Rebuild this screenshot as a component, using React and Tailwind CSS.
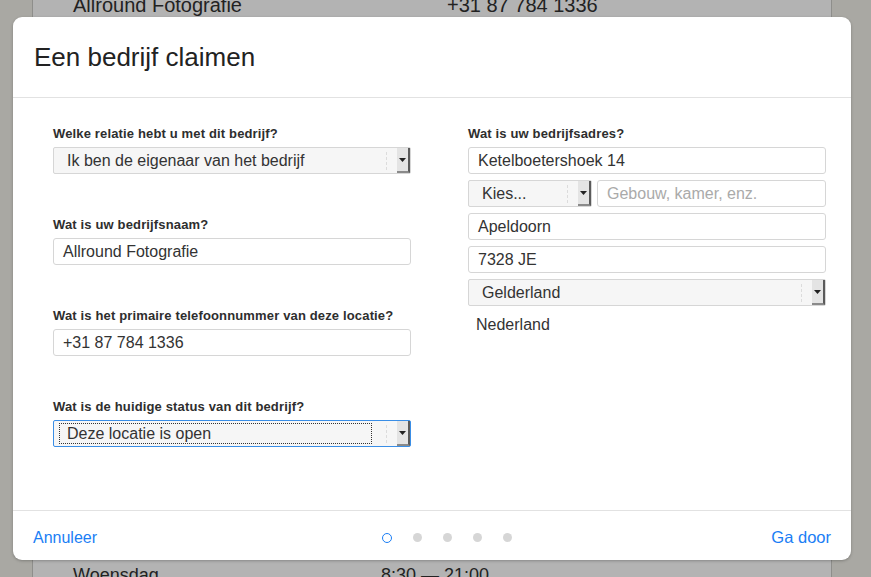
import React from "react";

const font = { fontFamily: '"Liberation Sans", Arial, sans-serif' };

function Arrow() {
  return (
    <span className="flex items-center h-full">
      <span className="h-[18px] border-l border-dashed border-[#dcdcdc] mr-[10px]" />
      <span className="flex items-center justify-center w-[13px] h-[25px] bg-[#e4e4e4] border-r-2 border-b-2 border-r-[#5a5a5a] border-b-[#8a8a8a]">
        <svg width="7" height="4" viewBox="0 0 7 4">
          <path d="M0 0 L7 0 L3.5 4 Z" fill="#222" />
        </svg>
      </span>
    </span>
  );
}

function Select({ value, focused, className = "" }) {
  return (
    <div
      className={`flex items-center justify-between h-[27px] rounded-[2px] bg-[#f6f6f6] ${
        focused ? "border border-[#3a8ee6]" : "border border-[#d6d6d6]"
      } ${className}`}
    >
      {focused ? (
        <span className="ml-[5px] flex-1 h-[21px] border border-dotted border-[#333] flex items-center pl-[7px] text-[16px] text-[#333]">
          {value}
        </span>
      ) : (
        <span className="pl-[13px] text-[16px] text-[#333]">{value}</span>
      )}
      <span className={focused ? "ml-[14px]" : ""}>
        <Arrow />
      </span>
    </div>
  );
}

function Input({ value, placeholder, className = "" }) {
  return (
    <div
      className={`flex items-center h-[27px] rounded-[3px] border border-[#d6d6d6] bg-white pl-[9px] text-[16px] ${
        value ? "text-[#333]" : "text-[#aaa]"
      } ${className}`}
    >
      {value || placeholder}
    </div>
  );
}

function Field({ label, children }) {
  return (
    <div className="flex flex-col">
      <div className="h-[16px] mb-[5px] text-[13px] leading-[16px] font-semibold text-[#2e2e2e] tracking-[0.15px]">
        {label}
      </div>
      {children}
    </div>
  );
}

export default function App() {
  return (
    <div className="relative w-[871px] h-[577px] overflow-hidden bg-[#a9a8a3]" style={font}>
      {/* page behind the dialog */}
      <div className="ml-[32px] w-[800px] h-full bg-[#b3b3b3] border-l border-r border-[#8e8e8b] flex flex-col justify-between">
        <div className="flex -mt-[7px] text-[20px] text-[#222] leading-[24px]">
          <span className="ml-[40px] w-[374px]">Allround Fotografie</span>
          <span>+31 87 784 1336</span>
        </div>
        <div className="flex -mb-[9px] text-[18px] text-[#222] leading-[22px]">
          <span className="ml-[40px] w-[308px]">Woensdag</span>
          <span>8:30 — 21:00</span>
        </div>
      </div>

      {/* dialog */}
      <div className="absolute left-[13px] top-[17px] w-[838px] h-[543px] bg-white rounded-[9px] shadow-[0_1px_3px_rgba(0,0,0,0.25)] flex flex-col">
        <div className="h-[81px] border-b border-[#e2e2e2] flex items-center pl-[21px]">
          <h1 className="text-[26px] text-[#222] font-normal">Een bedrijf claimen</h1>
        </div>

        <div className="flex-1 flex pt-[28px] pl-[40px] pr-[25px]">
          <div className="w-[358px] flex flex-col gap-[43px]">
            <Field label="Welke relatie hebt u met dit bedrijf?">
              <Select value="Ik ben de eigenaar van het bedrijf" />
            </Field>
            <Field label="Wat is uw bedrijfsnaam?">
              <Input value="Allround Fotografie" />
            </Field>
            <Field label="Wat is het primaire telefoonnummer van deze locatie?">
              <Input value="+31 87 784 1336" />
            </Field>
            <Field label="Wat is de huidige status van dit bedrijf?">
              <Select value="Deze locatie is open" focused />
            </Field>
          </div>

          <div className="w-[358px] ml-[57px]">
            <Field label="Wat is uw bedrijfsadres?">
              <div className="flex flex-col gap-[6px]">
                <Input value="Ketelboetershoek 14" />
                <div className="flex gap-[5px]">
                  <Select value="Kies..." className="w-[124px]" />
                  <Input placeholder="Gebouw, kamer, enz." className="flex-1" />
                </div>
                <Input value="Apeldoorn" />
                <Input value="7328 JE" />
                <Select value="Gelderland" />
                <div className="pl-[8px] pt-[1px] text-[16px] text-[#333]">Nederland</div>
              </div>
            </Field>
          </div>
        </div>

        <div className="h-[50px] border-t border-[#e2e2e2] flex items-center justify-between px-[20px] pt-[4px] text-[16px] text-[#1a7ef5]">
          <span>Annuleer</span>
          <div className="flex items-center gap-[21px] ml-[26px]">
            <span className="w-[10px] h-[10px] rounded-full border-[1.5px] border-[#1a7ef5]" />
            <span className="w-[9px] h-[9px] rounded-full bg-[#d6d6d6]" />
            <span className="w-[9px] h-[9px] rounded-full bg-[#d6d6d6]" />
            <span className="w-[9px] h-[9px] rounded-full bg-[#d6d6d6]" />
            <span className="w-[9px] h-[9px] rounded-full bg-[#d6d6d6]" />
          </div>
          <span className="text-[16.5px]">Ga door</span>
        </div>
      </div>
    </div>
  );
}
